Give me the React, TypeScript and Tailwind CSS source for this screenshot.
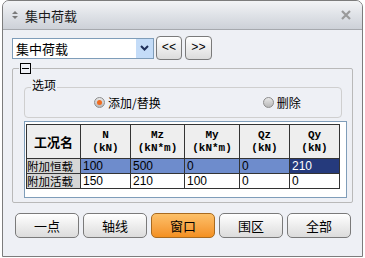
import React from "react"

const cols = [
  { w: "w-[54px]", top: "工况名", sub: "" },
  { w: "w-[50px]", top: "N", sub: "(kN)" },
  { w: "w-[54px]", top: "Mz", sub: "(kN*m)" },
  { w: "w-[55px]", top: "My", sub: "(kN*m)" },
  { w: "w-[50px]", top: "Qz", sub: "(kN)" },
  { w: "w-[50px]", top: "Qy", sub: "(kN)" },
]

const rows = [
  { name: "附加恒载", vals: ["100", "500", "0", "0", "210"], sel: true },
  { name: "附加活载", vals: ["150", "210", "100", "0", "0"], sel: false },
]

const btns = ["一点", "轴线", "窗口", "围区", "全部"]

function Radio({ on }: { on: boolean }) {
  return (
    <span className="w-[11px] h-[11px] rounded-full border border-[#8d8d8d] bg-gradient-to-b from-[#e8e8e8] to-[#b8b8b8] flex items-center justify-center">
      {on && <span className="w-[5px] h-[5px] rounded-full bg-[#f06a1e]" />}
    </span>
  )
}

export default function App() {
  return (
    <div className="w-[365px] h-[258px] bg-white" style={{ fontFamily: "'Noto Sans CJK SC', 'Liberation Sans', sans-serif" }}>
      <div className="ml-[2px] w-[361px] h-[257px] border border-[#7c7c7c] rounded-t-[7px] flex flex-col overflow-hidden bg-[#eef0f5]">
        {/* title bar */}
        <div className="h-[29px] flex items-center bg-gradient-to-b from-[#f3f4f6] via-[#dfe2e7] to-[#cdd1d8] border-b border-[#a6a9ae] shrink-0">
          <svg width="8" height="10" viewBox="0 0 8 10" className="ml-[8px]">
            <path d="M1 4 L4 1 L7 4 Z" fill="#7a7a7a" />
            <path d="M1 6 L4 9 L7 6 Z" fill="#7a7a7a" />
          </svg>
          <span className="ml-[6px] text-[13px] text-[#1a1a1a] leading-none">集中荷载</span>
          <svg width="12" height="12" viewBox="0 0 12 12" className="ml-auto mr-[10px]">
            <path d="M2 2 L10 10 M10 2 L2 10" stroke="#9a9a9a" strokeWidth="2.2" />
          </svg>
        </div>

        {/* selector row */}
        <div className="flex items-center mt-[6px] ml-[9px] gap-[2px]">
          <div className="w-[142px] h-[21px] border border-[#7f9db9] bg-white flex items-center">
            <span className="pl-[3px] text-[13px] text-black leading-none">集中荷载</span>
            <span className="ml-auto w-[17px] h-[19px] bg-[#c4dcf8] flex items-center justify-center">
              <svg width="9" height="6" viewBox="0 0 9 6">
                <path d="M1 1 L4.5 4.5 L8 1" stroke="#1f2f5a" strokeWidth="2" fill="none" />
              </svg>
            </span>
          </div>
          <div className="w-[26px] h-[24px] rounded-[4px] border border-[#7a7a7a] bg-gradient-to-b from-white to-[#dcdcdc] flex items-center justify-center text-[12px] text-black" style={{ fontFamily: "'Liberation Mono', monospace" }}>&lt;&lt;</div>
          <div className="w-[27px] h-[24px] ml-[1px] rounded-[4px] border border-[#7a7a7a] bg-gradient-to-b from-white to-[#dcdcdc] flex items-center justify-center text-[12px] text-black" style={{ fontFamily: "'Liberation Mono', monospace" }}>&gt;&gt;</div>
        </div>

        {/* group */}
        <div className="relative mt-[8px] ml-[9px] w-[341px] h-[135px] border border-[#b9b9b9] rounded-[2px]">
          <div className="absolute left-[6px] top-[-6px] px-[1px] bg-[#eef0f5]">
            <div className="w-[11px] h-[11px] border border-black flex items-center justify-center">
              <div className="w-[7px] h-[1px] bg-black" />
            </div>
          </div>

          {/* options */}
          <div className="relative mt-[18px] ml-[11px] w-[318px] h-[31px] border border-[#cfcfcf] rounded-[4px]">
            <span className="absolute left-[6px] top-[-9px] px-[1px] bg-[#eef0f5] text-[12px] leading-none text-black">选项</span>
            <div className="flex items-center h-full text-[12px] text-black">
              <span className="ml-[69px] flex items-center gap-[3px]"><Radio on />添加/替换</span>
              <span className="ml-[102px] flex items-center gap-[3px]"><Radio on={false} />删除</span>
            </div>
          </div>

          {/* table */}
          <div className="mt-[3px] ml-[11px] w-[323px] h-[77px] border border-[#7f9db9] bg-white pl-[1px] pt-[2px]">
            <div className="inline-flex flex-col border-t border-l border-[#333]">
              <div className="flex h-[34px]">
                {cols.map((c, i) => (
                  <div key={i} className={`${c.w} shrink-0 border-r border-b border-[#333] bg-[#eeeeee] flex flex-col items-center justify-center leading-[13px]`}>
                    {i === 0 ? (
                      <span className="text-[13px] font-bold text-black">{c.top}</span>
                    ) : (
                      <>
                        <span className="text-[11px] font-bold text-black" style={{ fontFamily: "'Liberation Mono', monospace" }}>{c.top}</span>
                        <span className="text-[11px] font-bold text-black" style={{ fontFamily: "'Liberation Mono', monospace" }}>{c.sub}</span>
                      </>
                    )}
                  </div>
                ))}
              </div>
              {rows.map((r, ri) => (
                <div key={ri} className="flex h-[15px]">
                  <div className="w-[54px] shrink-0 border-r border-b border-[#333] bg-[#d6d6d6] whitespace-nowrap text-[11.5px] leading-[14px] text-black">
                    {r.name}
                  </div>
                  {r.vals.map((v, vi) => {
                    const w = cols[vi + 1].w
                    const dark = r.sel && vi === 4
                    const blue = r.sel && vi < 4
                    return (
                      <div
                        key={vi}
                        className={`${w} shrink-0 border-r border-b border-[#333] text-[12px] leading-[14px] pl-[2px] whitespace-nowrap ${dark ? "bg-[#253a7c] text-white" : blue ? "bg-[#6e8ccc] text-black" : "bg-white text-black"}`}
                        style={{ fontFamily: "'Liberation Sans', sans-serif" }}
                      >
                        {v}
                      </div>
                    )
                  })}
                </div>
              ))}
            </div>
          </div>
        </div>

        {/* buttons */}
        <div className="flex gap-[4px] mt-[10px] ml-[12px]">
          {btns.map((b) => (
            <div
              key={b}
              className={`w-[64px] h-[25px] rounded-[5px] border flex items-center justify-center text-[13px] text-black ${b === "窗口" ? "border-[#a86a20] bg-gradient-to-b from-[#fcc068] to-[#f3901f]" : "border-[#7a7a7a] bg-gradient-to-b from-white to-[#dcdcdc]"}`}
            >
              {b}
            </div>
          ))}
        </div>
      </div>
    </div>
  )
}
